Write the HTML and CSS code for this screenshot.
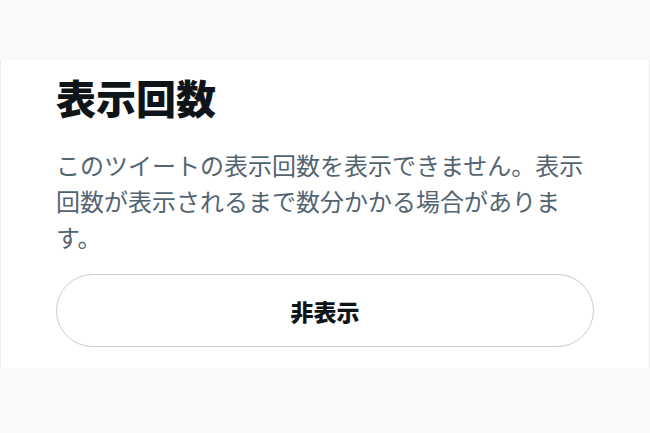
FILE: index.html
```html
<!DOCTYPE html>
<html lang="ja">
<head>
    <meta charset="UTF-8">
    <meta name="viewport" content="width=device-width, initial-scale=1.0">
    <title>表示回数</title>
    <link rel="stylesheet" href="styles.css">
</head>
<body>
    <div class="top-space"></div>
    <div class="sheet">
        <h2 class="sheet-title">表示回数</h2>
        <p class="sheet-text">このツイートの表示回数を表示できません。表示回数が表示されるまで数分かかる場合があります。</p>
        <button class="hide-btn">非表示</button>
    </div>
</body>
</html>
```

FILE: styles.css
```css
body {
    margin: 0;
    background-color: #f8f9f9;
    font-family: "Noto Sans CJK JP", "Noto Sans", sans-serif;
}
.top-space {
    height: 60px;
}
.sheet {
    height: 308px;
    box-sizing: border-box;
    background: #fff;
    padding: 13px 55px 0 55px;
    border-left: 1px solid #ececec;
    border-right: 1px solid #ececec;
}
.sheet-title {
    margin: 0;
    font-size: 40px;
    line-height: 48px;
    font-weight: 900;
    color: #0f1419;
}
.sheet-text {
    margin: 26px 0 0 0;
    font-size: 24px;
    line-height: 36px;
    color: #536471;
}
.hide-btn {
    display: block;
    width: 100%;
    height: 73px;
    margin-top: 19px;
    background: #fff;
    border: 1.5px solid #c4cfd4;
    border-radius: 40px;
    font-family: inherit;
    font-size: 23px;
    font-weight: 900;
    color: #0f1419;
    cursor: pointer;
}
```
